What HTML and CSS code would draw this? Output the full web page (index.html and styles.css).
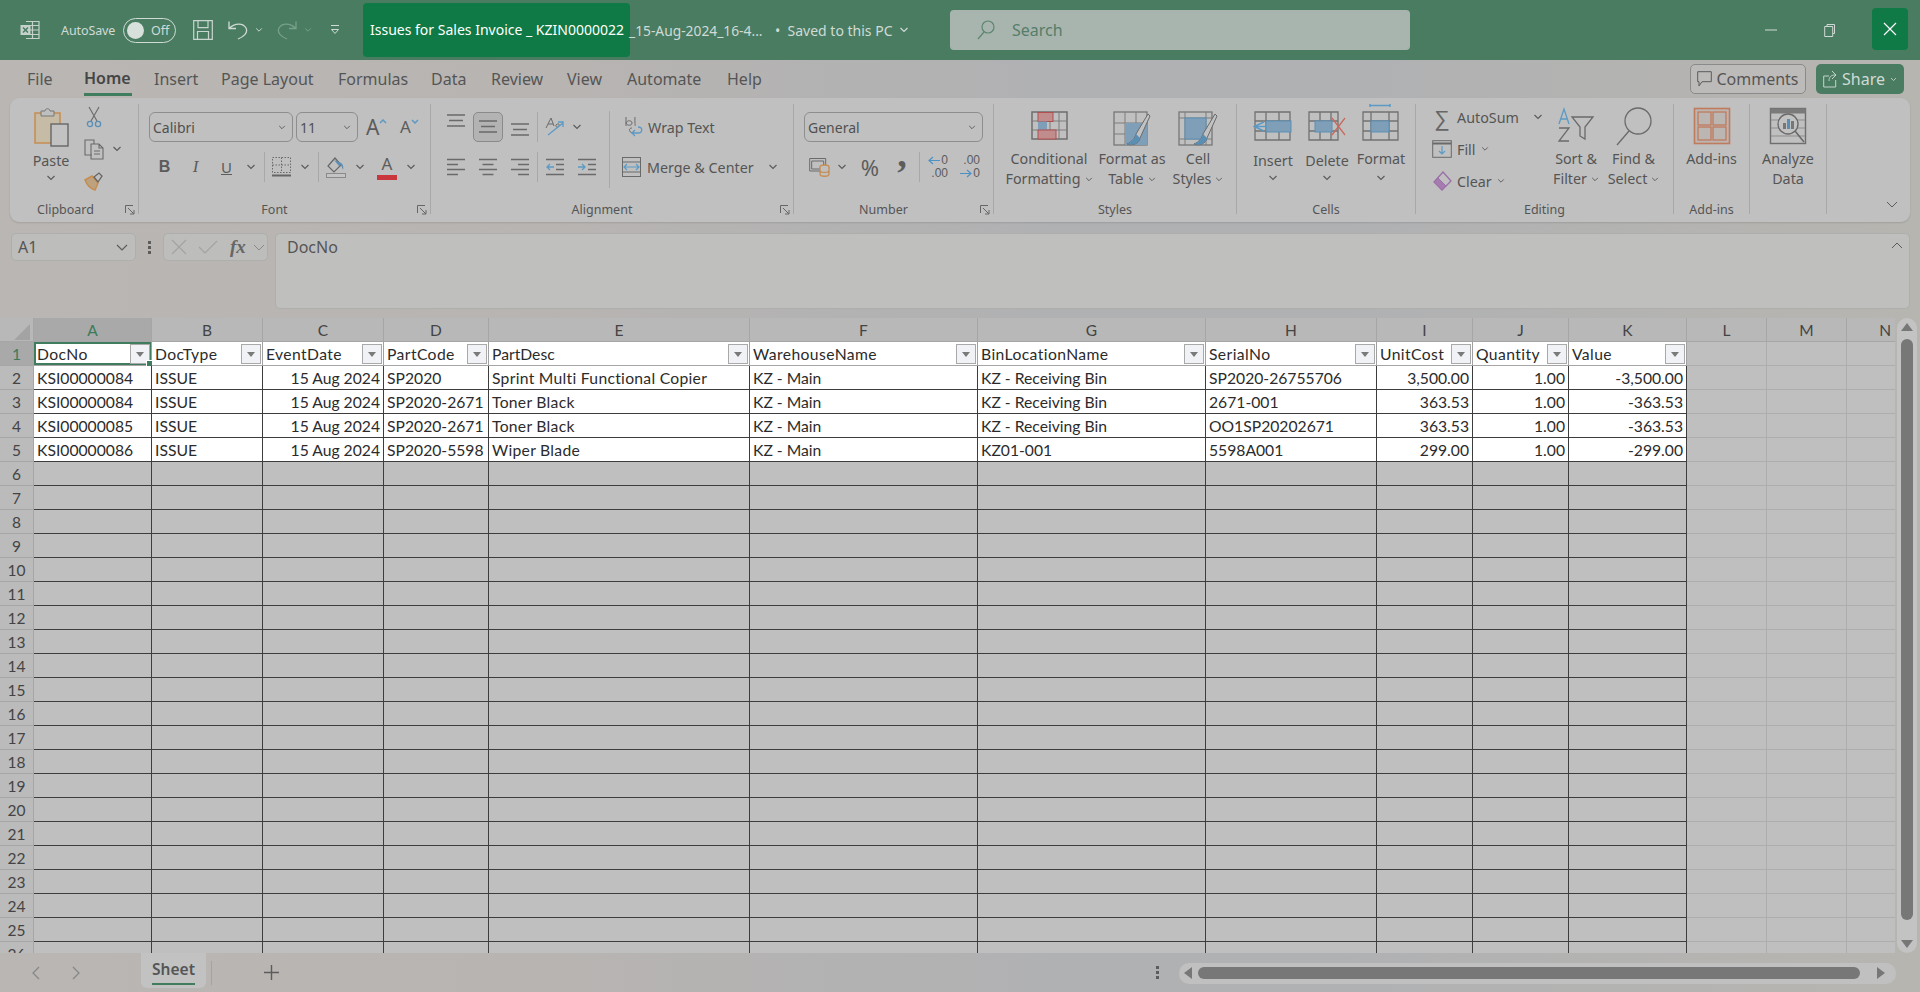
FILE: index.html
```html
<!DOCTYPE html>
<html lang="en">
<head>
<meta charset="utf-8">
<title>Issues for Sales Invoice - Excel</title>
<link rel="stylesheet" href="styles.css">
</head>
<body>
<svg class="sprite" aria-hidden="true">
  <symbol id="chev" viewBox="0 0 10 6"><path d="M1.5 1l3.5 3.5L8.500 1" fill="none" stroke="currentColor" stroke-width="1.200"/></symbol>
  <symbol id="launch" viewBox="0 0 10 10"><path d="M.5 8V.5H8M3 3l6 6M9 5v4H5" fill="none" stroke="#666" stroke-width="1"/></symbol>
  <symbol id="al3" viewBox="0 0 18 14"><path d="M0 1h18M2 6.500h14M0 12h18" stroke="#6a6a6a" stroke-width="1.300"/></symbol>
  <symbol id="alL" viewBox="0 0 18 18"><path d="M0 1.500h18M0 6.500h11M0 11.500h18M0 16.500h11" stroke="#6a6a6a" stroke-width="1.300"/></symbol>
  <symbol id="alC" viewBox="0 0 18 18"><path d="M0 1.500h18M3.500 6.500h11M0 11.500h18M3.500 16.500h11" stroke="#6a6a6a" stroke-width="1.300"/></symbol>
  <symbol id="alR" viewBox="0 0 18 18"><path d="M0 1.500h18M7 6.500h11M0 11.500h18M7 16.500h11" stroke="#6a6a6a" stroke-width="1.300"/></symbol>
</svg>

<header class="titlebar">
  <svg class="t-logo" width="20" height="20" viewBox="0 0 20 20"><path d="M6 1.500h13v17H6M6 5.500h13M6 10h13M6 14.500h13M12.500 1.500v17" fill="none" stroke="#c4d2ca" stroke-width="1.200"/><rect x="0.500" y="5" width="10" height="10" fill="#c4d2ca"/><path d="M3 7.500l5 5M8 7.500l-5 5" stroke="#4a7c62" stroke-width="1.500"/></svg>
  <span class="t-autosave">AutoSave</span>
  <span class="toggle"><span class="knob"></span><span class="toggle-text">Off</span></span>
  <svg class="t-save" width="20" height="20" viewBox="0 0 20 20"><path d="M.7.700h18.600v18.600H.7zM5 .7v7h10v-7M4.500 19v-7.500h11V19" fill="none" stroke="#c9d5cf" stroke-width="1.200"/></svg>
  <svg class="t-undo" width="20" height="20" viewBox="0 0 20 20"><path d="M1 1.500v7h7M1.500 8C7 3 15 2.500 18 8c2.500 5-3 9-8 11" fill="none" stroke="#cfdad4" stroke-width="1.300"/></svg>
  <svg class="chev t-chev1"><use href="#chev"/></svg>
  <svg class="t-redo" width="20" height="20" viewBox="0 0 20 20"><path d="M19 1.500v7h-7M18.500 8C13 3 5 2.500 2 8c-2.500 5 3 9 8 11" fill="none" stroke="#78a08b" stroke-width="1.300"/></svg>
  <svg class="chev t-chev2 dim"><use href="#chev"/></svg>
  <svg class="t-custom" width="10" height="12" viewBox="0 0 10 12"><path d="M1 1.500h8M1.500 5.500L5 9.500l3.500-4z" fill="none" stroke="#cfdad4"/></svg>
  <div class="t-file"><span class="t-file-box">Issues for Sales Invoice _ KZIN0000022</span><span class="t-file-rest">_15-Aug-2024_16-4...</span></div>
  <span class="t-saved">• &nbsp;Saved to this PC</span>
  <svg class="chev t-chev3"><use href="#chev"/></svg>
  <div class="search">
    <svg width="18" height="20" viewBox="0 0 18 20"><circle cx="11" cy="7" r="6" fill="none" stroke="#5d8570" stroke-width="1.200"/><path d="M7 12L1 19" stroke="#5d8570" stroke-width="1.200"/></svg>
    <span>Search</span>
  </div>
  <div class="win">
    <svg class="w-min" width="12" height="2" viewBox="0 0 12 2"><path d="M0 1h12" stroke="#cfdad4"/></svg>
    <svg class="w-res" width="12" height="14" viewBox="0 0 12 14"><path d="M3 3V1.500h7.500v9H9M.7 3.500h8v10h-8z" fill="none" stroke="#cfdad4"/></svg>
    <div class="w-close"><svg width="14" height="14" viewBox="0 0 14 14"><path d="M1 1l12 12M13 1L1 13" stroke="#fff" stroke-width="1.200"/></svg></div>
  </div>
</header>

<nav class="tabs">
  <span class="tab tab-file">File</span>
  <span class="tab tab-home">Home</span>
  <span class="tab tab-insert">Insert</span>
  <span class="tab tab-layout">Page Layout</span>
  <span class="tab tab-formulas">Formulas</span>
  <span class="tab tab-data">Data</span>
  <span class="tab tab-review">Review</span>
  <span class="tab tab-view">View</span>
  <span class="tab tab-auto">Automate</span>
  <span class="tab tab-help">Help</span>
  <div class="tab-actions">
    <span class="btn-comments"><svg width="15" height="16" viewBox="0 0 15 16"><path d="M.7.700h13.600v10H5L2 15v-4.300H.7z" fill="none" stroke="#5c5c5c"/></svg>Comments</span>
    <span class="btn-share"><svg width="14" height="18" viewBox="0 0 14 18"><path d="M6 6H.7v11h12V10M6 11C6 7 8 5 12 5M9 1l4 4-4 4" fill="none" stroke="#c6d4cc"/></svg>Share<svg class="chev mini"><use href="#chev"/></svg></span>
  </div>
</nav>

<section class="ribbon">
  <div class="group g-clip">
    <div class="g-body row">
      <div class="big paste">
        <svg class="big-ic" viewBox="0 0 40 45"><rect x="4" y="9" width="25" height="30" fill="#c6bba4" stroke="#c68c50" stroke-width="1.500"/><path d="M10 12V7h4c0-3 5-3 5 0h4v5z" fill="#bfbfbf" stroke="#777"/><rect x="20" y="20" width="17" height="22" fill="#c2c2c2" stroke="#666" stroke-width="1.400"/></svg>
        <span class="big-t">Paste</span>
        <svg class="chev"><use href="#chev"/></svg>
      </div>
      <div class="stack clip-stack">
        <div class="s-row"><svg class="clip-ic" width="20" height="22" viewBox="0 0 20 22"><path d="M5 1l8 14M15 1L7 15" stroke="#6a6a6a" stroke-width="1.100"/><circle cx="6" cy="18" r="2.600" fill="none" stroke="#5a8fb5" stroke-width="1.300"/><circle cx="14" cy="18" r="2.600" fill="none" stroke="#5a8fb5" stroke-width="1.300"/></svg></div>
        <div class="s-row"><svg class="clip-ic" width="20" height="22" viewBox="0 0 20 22"><path d="M8 17H1V2h9v4M7 6h8l4 4v11H7zM15 6v4h4M10 13h6M10 16h6" fill="none" stroke="#6a6a6a" stroke-width="1.100"/></svg><svg class="chev clip-chev"><use href="#chev"/></svg></div>
        <div class="s-row"><svg class="clip-ic" width="20" height="20" viewBox="0 0 20 20"><path d="M1 9l7-4 6 7-3 7c-4-1-8-5-10-10z" fill="#bda27f" stroke="#c68c50" stroke-width="1.500"/><path d="M10 6l5-4 3 3-4 6z" fill="none" stroke="#666" stroke-width="1.300"/></svg></div>
      </div>
    </div>
    <div class="g-label shift-17">Clipboard<svg class="launch"><use href="#launch"/></svg></div>
  </div>

  <div class="group g-font">
    <div class="g-body rows">
      <div class="rw">
        <span class="select sel-font">Calibri<svg class="chev"><use href="#chev"/></svg></span>
        <span class="select sel-size">11<svg class="chev"><use href="#chev"/></svg></span>
        <span class="grow-a">A<svg class="caret" width="8" height="5" viewBox="0 0 8 5"><path d="M1 4l3-3 3 3" fill="none" stroke="#5a9ac5" stroke-width="1.500"/></svg></span>
        <span class="shrink-a">A<svg class="caret" width="8" height="5" viewBox="0 0 8 5"><path d="M1 1l3 3 3-3" fill="none" stroke="#5a9ac5" stroke-width="1.500"/></svg></span>
      </div>
      <div class="rw">
        <span class="fmt fmt-b">B</span><span class="fmt fmt-i">I</span><span class="fmt fmt-u">U</span>
        <svg class="chev w18"><use href="#chev"/></svg>
        <span class="vsep m4"></span>
        <svg class="m7" width="19" height="20" viewBox="0 0 19 20"><path d="M.5.500h18v15H.5zM9.500.5v15M.5 8h18" fill="none" stroke="#6a6a6a" stroke-dasharray="1.500 1.500"/><path d="M0 18.500h19" stroke="#666" stroke-width="2"/></svg>
        <svg class="chev w18 m5"><use href="#chev"/></svg>
        <span class="vsep m4"></span>
        <svg class="m7" width="20" height="21" viewBox="0 0 20 21"><path d="M9 1L2 9l6 6 7-7z" fill="none" stroke="#666" stroke-width="1.200"/><path d="M8 3l5 6 2-1 2 5c1-3 0-7-4-8" fill="#5a8fb5"/><rect x=".5" y="16.500" width="19" height="4" fill="#c4c4c4" stroke="#8a8a8a"/></svg>
        <svg class="chev w18 m5"><use href="#chev"/></svg>
        <span class="font-color">A</span>
        <svg class="chev w18 m5"><use href="#chev"/></svg>
      </div>
    </div>
    <div class="g-label shift-20">Font<svg class="launch"><use href="#launch"/></svg></div>
  </div>

  <div class="group g-align">
    <div class="g-body row">
      <div class="rows a-block">
        <div class="rw">
          <svg class="va-top" width="18" height="14"><use href="#al3"/></svg>
          <span class="pressed m8"><svg width="18" height="14"><use href="#al3"/></svg></span>
          <svg class="m8 va-bot" width="18" height="14"><use href="#al3"/></svg>
          <span class="vsep m8"></span>
          <svg class="m7" width="20" height="20" viewBox="0 0 20 20"><path d="M1 11L6 1l3 8M3 7h5M11 8c2-2 4-1 3 1s-4 1-3-1z" fill="none" stroke="#6a6a6a"/><path d="M3 18L18 6M13 5h5v5" fill="none" stroke="#5a9ac5" stroke-width="1.300"/></svg>
          <svg class="chev w18 m3"><use href="#chev"/></svg>
        </div>
        <div class="rw">
          <svg width="18" height="18"><use href="#alL"/></svg>
          <svg class="m14" width="18" height="18"><use href="#alC"/></svg>
          <svg class="m14" width="18" height="18"><use href="#alR"/></svg>
          <span class="vsep m8"></span>
          <svg class="m8" width="18" height="18" viewBox="0 0 18 18"><path d="M0 1.500h18M10 6.500h8M10 11.500h8M0 16.500h18" stroke="#6a6a6a" stroke-width="1.300"/><path d="M8 9H1M4 6L1 9l3 3" fill="none" stroke="#5a9ac5" stroke-width="1.300"/></svg>
          <svg class="m14" width="18" height="18" viewBox="0 0 18 18"><path d="M0 1.500h18M10 6.500h8M10 11.500h8M0 16.500h18" stroke="#6a6a6a" stroke-width="1.300"/><path d="M0 9h7M4 6l3 3-3 3" fill="none" stroke="#5a9ac5" stroke-width="1.300"/></svg>
        </div>
      </div>
      <span class="long-sep"></span>
      <div class="rows">
        <div class="rw">
          <svg class="m15" width="18" height="22" viewBox="0 0 18 22"><path d="M1 10V1M1 7c1-3 6-3 6 0s-5 3-6 0M10 1c-.5 5 .5 9 0 9M8 17c-4 0-5-5-1-5" fill="none" stroke="#6a6a6a"/><path d="M7 17h6c5 0 5-6 0-6M10 14l-3 3 3 3" fill="none" stroke="#5a9ac5" stroke-width="1.300"/></svg>
          <span class="rb-text m5">Wrap Text</span>
        </div>
        <div class="rw">
          <svg class="m12" width="19" height="20" viewBox="0 0 19 20"><rect x=".5" y=".5" width="18" height="19" fill="none" stroke="#6a6a6a"/><path d="M.5 5h18M.5 15h18" stroke="#6a6a6a"/><path d="M2 10h15M5 7l-3 3 3 3M14 7l3 3-3 3" fill="none" stroke="#5a9ac5" stroke-width="1.200"/></svg>
          <span class="rb-text m6">Merge &amp; Center</span>
          <svg class="chev w18 m10"><use href="#chev"/></svg>
        </div>
      </div>
    </div>
    <div class="g-label shift-20">Alignment<svg class="launch"><use href="#launch"/></svg></div>
  </div>

  <div class="group g-number">
    <div class="g-body rows">
      <div class="rw"><span class="select sel-gen">General<svg class="chev"><use href="#chev"/></svg></span></div>
      <div class="rw">
        <svg class="m5" width="21" height="20" viewBox="0 0 21 20"><path d="M.7 1.500h16V14H.7zM2.700 4h12v8H2.700z" fill="none" stroke="#6a6a6a"/><ellipse cx="15.500" cy="10" rx="4.500" ry="2" fill="#c0c0c0" stroke="#c68c50" stroke-width="1.300"/><path d="M11 10v7c0 3 9 3 9 0v-7M11 13.500c0 2.500 9 2.500 9 0" fill="#c0c0c0" stroke="#c68c50" stroke-width="1.300"/></svg>
        <svg class="chev w18 m3"><use href="#chev"/></svg>
        <span class="pct">%</span>
        <span class="comma">,</span>
        <span class="vsep m11"></span>
        <span class="dec m7"><span class="dec-l"><svg width="12" height="9" viewBox="0 0 12 9"><path d="M12 4.500H1M5 1L1 4.500 5 8" fill="none" stroke="#4d92c4" stroke-width="1.200"/></svg>0</span><span>.00</span></span>
        <span class="dec m11"><span>.00</span><span class="dec-l"><svg width="12" height="9" viewBox="0 0 12 9"><path d="M0 4.500h11M7 1l4 3.500L7 8" fill="none" stroke="#4d92c4" stroke-width="1.200"/></svg>0</span></span>
      </div>
    </div>
    <div class="g-label shift-20">Number<svg class="launch"><use href="#launch"/></svg></div>
  </div>

  <div class="group g-styles">
    <div class="g-body cols-styles">
      <div class="big">
        <svg class="big-ic" viewBox="0 0 40 45"><rect x="3" y="8" width="35" height="27" fill="none" stroke="#6e6e6e" stroke-width="1.500"/><path d="M12 8v27M21 8v27M30 8v27M3 17h35M3 26h35" stroke="#7d7d7d"/><rect x="9" y="8.500" width="15" height="9" fill="#c08c8c" stroke="#b05050"/><rect x="9" y="17.500" width="9" height="9" fill="#7f9fb8"/><rect x="9" y="26" width="18" height="9" fill="#c08c8c" stroke="#b05050"/></svg>
        <span class="big-t">Conditional<br>Formatting<svg class="chev inl"><use href="#chev"/></svg></span>
      </div>
      <div class="big">
        <svg class="big-ic" viewBox="0 0 40 45"><rect x="2" y="8" width="33" height="33" fill="none" stroke="#777" stroke-width="1.300"/><path d="M13 8v33M24 8v33M2 19h33M2 30h33" stroke="#7d7d7d"/><rect x="13" y="19" width="22" height="22" fill="#7f9fb8"/><path d="M36 10L24 30c-1 4-4 8-9 10 5 2 12 0 13-6l10-22z" fill="#c2c2c2" stroke="#6a6a6a"/><path d="M24 30c-1 4-4 8-9 10 5 2 12 0 13-6z" fill="#5a8fb5"/></svg>
        <span class="big-t">Format as<br>Table<svg class="chev inl"><use href="#chev"/></svg></span>
      </div>
      <div class="big">
        <svg class="big-ic" viewBox="0 0 40 45"><rect x="1" y="8" width="33" height="33" fill="none" stroke="#777" stroke-width="1.300"/><path d="M7 8v33M28 8v33M1 14h33M1 35h33" stroke="#7d7d7d"/><rect x="7" y="14" width="21" height="21" fill="#7f9fb8" stroke="#5a8fb5"/><path d="M37 10L25 30c-1 4-4 8-9 10 5 2 12 0 13-6l10-22z" fill="#c2c2c2" stroke="#6a6a6a"/><path d="M25 30c-1 4-4 8-9 10 5 2 12 0 13-6z" fill="#5a8fb5"/></svg>
        <span class="big-t">Cell<br>Styles<svg class="chev inl"><use href="#chev"/></svg></span>
      </div>
    </div>
    <div class="g-label">Styles</div>
  </div>

  <div class="group g-cells">
    <div class="g-body cols-cells">
      <div class="big">
        <svg class="big-ic" viewBox="0 0 40 45"><path d="M2 8h35v28H2zM2 17h35M2 27h35M13 8v28M26 8v28" fill="none" stroke="#717171" stroke-width="1.300"/><rect x="13" y="17" width="25" height="11" fill="#7f9fb8" stroke="#5a8fb5"/><path d="M11 18l-10 4.500L11 27M2 22.500h12" fill="none" stroke="#5a9ac5" stroke-width="1.500"/></svg>
        <span class="big-t lo">Insert</span><svg class="chev"><use href="#chev"/></svg>
      </div>
      <div class="big">
        <svg class="big-ic" viewBox="0 0 40 45"><path d="M2 8h29v28H2zM2 17h29M2 27h29M13 8v28M24 8v28" fill="none" stroke="#717171" stroke-width="1.300"/><rect x="8" y="17" width="17" height="11" fill="#7f9fb8" stroke="#5a8fb5"/><path d="M25 14l13 17M38 14L25 31" stroke="#c86a60" stroke-width="1.300"/></svg>
        <span class="big-t lo">Delete</span><svg class="chev"><use href="#chev"/></svg>
      </div>
      <div class="big">
        <svg class="big-ic" viewBox="0 0 40 45"><path d="M2 8h35v28H2zM2 17h35M2 27h35M10 8v28M28 8v28" fill="none" stroke="#717171" stroke-width="1.300"/><rect x="10" y="17" width="18" height="11" fill="#7f9fb8" stroke="#5a8fb5"/><path d="M9 1.500h20M9 0v3M29 0v3" stroke="#5a9ac5" stroke-width="1.500"/></svg>
        <span class="big-t">Format</span><svg class="chev cfmt"><use href="#chev"/></svg>
      </div>
    </div>
    <div class="g-label">Cells</div>
  </div>

  <div class="group g-edit">
    <div class="g-body row">
      <div class="stack edit-stack">
        <div class="s-row"><span class="sigma">∑</span><span class="rb-text ed-t">AutoSum</span><svg class="chev w18 m10"><use href="#chev"/></svg></div>
        <div class="s-row"><svg width="20" height="18" viewBox="0 0 20 18"><rect x=".7" y=".7" width="18.600" height="16.600" fill="none" stroke="#6a6a6a"/><path d="M.7 3.500h18.600" stroke="#6a6a6a" stroke-width="2"/><path d="M10 6v8M7 11l3 3 3-3" fill="none" stroke="#5a9ac5" stroke-width="1.200"/></svg><span class="rb-text ed-t m5">Fill</span><svg class="chev w14"><use href="#chev"/></svg></div>
        <div class="s-row"><svg width="20" height="20" viewBox="0 0 20 20"><path d="M11 1l8 9-9 9-8-8z" fill="none" stroke="#9a6fa8" stroke-width="1.300"/><path d="M6 7l8 8-4 4-8-8z" fill="#a57bb0" stroke="#9a6fa8"/></svg><span class="rb-text ed-t m5">Clear</span><svg class="chev w14"><use href="#chev"/></svg></div>
      </div>
      <div class="big col-sort">
        <svg class="big-ic" viewBox="0 0 40 45"><path d="M3 20L8 5l5 15M4.500 15h7" fill="none" stroke="#5a9ac5" stroke-width="1.300"/><path d="M3 24h10L3 37h10" fill="none" stroke="#6a6a6a" stroke-width="1.300"/><path d="M16 13h21l-8 10v12l-5-3V23z" fill="none" stroke="#6a6a6a" stroke-width="1.300"/></svg>
        <span class="big-t">Sort &amp;<br>Filter<svg class="chev inl"><use href="#chev"/></svg></span>
      </div>
      <div class="big col-find">
        <svg class="big-ic" viewBox="0 0 40 45"><circle cx="24" cy="17" r="13" fill="none" stroke="#6a6a6a" stroke-width="1.300"/><path d="M15 27L3 41" stroke="#6a6a6a" stroke-width="1.300"/></svg>
        <span class="big-t">Find &amp;<br>Select<svg class="chev inl"><use href="#chev"/></svg></span>
      </div>
    </div>
    <div class="g-label">Editing</div>
  </div>

  <div class="group g-addins">
    <div class="g-body center">
      <div class="big">
        <svg class="big-ic" viewBox="0 0 40 45"><rect x="2.500" y="4.500" width="35" height="35" fill="#bcb6b2" stroke="#c07a5c" stroke-width="1.600"/><rect x="6" y="8" width="13" height="13" fill="none" stroke="#c07a5c" stroke-width="1.300"/><rect x="21" y="8" width="13" height="13" fill="none" stroke="#c07a5c" stroke-width="1.300"/><rect x="6" y="23" width="13" height="13" fill="none" stroke="#c07a5c" stroke-width="1.300"/><rect x="21" y="23" width="13" height="13" fill="none" stroke="#c07a5c" stroke-width="1.300"/></svg>
        <span class="big-t">Add-ins</span>
      </div>
    </div>
    <div class="g-label">Add-ins</div>
  </div>

  <div class="group g-analyze">
    <div class="g-body center">
      <div class="big">
        <svg class="big-ic" viewBox="0 0 40 45"><rect x="2.500" y="4.500" width="35" height="35" fill="none" stroke="#6e6e6e" stroke-width="1.400"/><rect x="2.500" y="4.500" width="35" height="5" fill="#7a7a7a"/><path d="M3 16h34M3 24h34M3 32h34" stroke="#8d8d8d"/><circle cx="20" cy="20" r="10" fill="#c2c2c2" stroke="#6a6a6a" stroke-width="1.400"/><path d="M27 27l9 11" stroke="#6a6a6a" stroke-width="1.600"/><rect x="15" y="19" width="3" height="6" fill="#777"/><rect x="19" y="15" width="3" height="10" fill="#5a8fb5"/><rect x="23" y="17" width="3" height="8" fill="#777"/></svg>
        <span class="big-t">Analyze<br>Data</span>
      </div>
    </div>
  </div>
  <div class="r-collapse"><svg class="chev-big" viewBox="0 0 12 7"><path d="M1 1l5 5 5-5" fill="none" stroke="#5c5c5c"/></svg></div>
</section>

<section class="formula">
  <div class="namebox"><span>A1</span><svg class="chev-big" viewBox="0 0 12 7"><path d="M1 1l5 5 5-5" fill="none" stroke="#5c5c5c" stroke-width="1.200"/></svg></div>
  <div class="f-dots"><i></i><i></i><i></i></div>
  <div class="fx">
    <svg width="16" height="16" viewBox="0 0 16 16"><path d="M1 1l14 14M15 1L1 15" stroke="#a3a3a3" stroke-width="1.200"/></svg>
    <svg class="fx-check" width="20" height="14" viewBox="0 0 20 14"><path d="M1 7l6 6L19 1" fill="none" stroke="#a3a3a3" stroke-width="1.200"/></svg>
    <span class="fx-t">fx</span>
    <svg class="chev-big fx-ch" viewBox="0 0 12 7"><path d="M1 1l5 5 5-5" fill="none" stroke="#8a8a8a"/></svg>
  </div>
  <div class="f-input"><span>DocNo</span><svg class="chev-big" viewBox="0 0 12 7"><path d="M1 6l5-5 5 5" fill="none" stroke="#5c5c5c"/></svg></div>
</section>

<main class="sheet-wrap">
  <div class="sheet">
    <table class="grid">
      <colgroup><col class="c0"><col class="ca"><col class="cb"><col class="cc"><col class="cd"><col class="ce"><col class="cf"><col class="cg"><col class="ch"><col class="ci"><col class="cj"><col class="ck"><col class="cl"><col class="cm"><col class="cn"></colgroup>
      <thead><tr><th class="corner"><svg width="16" height="16" viewBox="0 0 16 16"><path d="M16 0v16H0z" fill="#a3a3a3"/></svg></th><th class="sel-col">A</th><th>B</th><th>C</th><th>D</th><th>E</th><th>F</th><th>G</th><th>H</th><th>I</th><th>J</th><th>K</th><th>L</th><th>M</th><th class="clip">N</th></tr></thead>
      <tbody>
        <tr class="hdr"><th class="sel-row">1</th>
          <td class="active">DocNo<span class="flt"></span></td><td>DocType<span class="flt"></span></td><td>EventDate<span class="flt"></span></td><td>PartCode<span class="flt"></span></td><td>PartDesc<span class="flt"></span></td><td>WarehouseName<span class="flt"></span></td><td>BinLocationName<span class="flt"></span></td><td>SerialNo<span class="flt"></span></td><td>UnitCost<span class="flt"></span></td><td>Quantity<span class="flt"></span></td><td>Value<span class="flt"></span></td><td></td><td></td><td></td></tr>
        <tr class="data"><th>2</th><td>KSI00000084</td><td>ISSUE</td><td class="r">15 Aug 2024</td><td>SP2020</td><td>Sprint Multi Functional Copier</td><td>KZ - Main</td><td>KZ - Receiving Bin</td><td>SP2020-26755706</td><td class="r">3,500.00</td><td class="r">1.00</td><td class="r">-3,500.00</td><td></td><td></td><td></td></tr>
        <tr class="data"><th>3</th><td>KSI00000084</td><td>ISSUE</td><td class="r">15 Aug 2024</td><td>SP2020-2671</td><td>Toner Black</td><td>KZ - Main</td><td>KZ - Receiving Bin</td><td>2671-001</td><td class="r">363.53</td><td class="r">1.00</td><td class="r">-363.53</td><td></td><td></td><td></td></tr>
        <tr class="data"><th>4</th><td>KSI00000085</td><td>ISSUE</td><td class="r">15 Aug 2024</td><td>SP2020-2671</td><td>Toner Black</td><td>KZ - Main</td><td>KZ - Receiving Bin</td><td>OO1SP20202671</td><td class="r">363.53</td><td class="r">1.00</td><td class="r">-363.53</td><td></td><td></td><td></td></tr>
        <tr class="data"><th>5</th><td>KSI00000086</td><td>ISSUE</td><td class="r">15 Aug 2024</td><td>SP2020-5598</td><td>Wiper Blade</td><td>KZ - Main</td><td>KZ01-001</td><td>5598A001</td><td class="r">299.00</td><td class="r">1.00</td><td class="r">-299.00</td><td></td><td></td><td></td></tr>
        <tr><th>6</th><td></td><td></td><td></td><td></td><td></td><td></td><td></td><td></td><td></td><td></td><td></td><td></td><td></td><td></td></tr>
        <tr><th>7</th><td></td><td></td><td></td><td></td><td></td><td></td><td></td><td></td><td></td><td></td><td></td><td></td><td></td><td></td></tr>
        <tr><th>8</th><td></td><td></td><td></td><td></td><td></td><td></td><td></td><td></td><td></td><td></td><td></td><td></td><td></td><td></td></tr>
        <tr><th>9</th><td></td><td></td><td></td><td></td><td></td><td></td><td></td><td></td><td></td><td></td><td></td><td></td><td></td><td></td></tr>
        <tr><th>10</th><td></td><td></td><td></td><td></td><td></td><td></td><td></td><td></td><td></td><td></td><td></td><td></td><td></td><td></td></tr>
        <tr><th>11</th><td></td><td></td><td></td><td></td><td></td><td></td><td></td><td></td><td></td><td></td><td></td><td></td><td></td><td></td></tr>
        <tr><th>12</th><td></td><td></td><td></td><td></td><td></td><td></td><td></td><td></td><td></td><td></td><td></td><td></td><td></td><td></td></tr>
        <tr><th>13</th><td></td><td></td><td></td><td></td><td></td><td></td><td></td><td></td><td></td><td></td><td></td><td></td><td></td><td></td></tr>
        <tr><th>14</th><td></td><td></td><td></td><td></td><td></td><td></td><td></td><td></td><td></td><td></td><td></td><td></td><td></td><td></td></tr>
        <tr><th>15</th><td></td><td></td><td></td><td></td><td></td><td></td><td></td><td></td><td></td><td></td><td></td><td></td><td></td><td></td></tr>
        <tr><th>16</th><td></td><td></td><td></td><td></td><td></td><td></td><td></td><td></td><td></td><td></td><td></td><td></td><td></td><td></td></tr>
        <tr><th>17</th><td></td><td></td><td></td><td></td><td></td><td></td><td></td><td></td><td></td><td></td><td></td><td></td><td></td><td></td></tr>
        <tr><th>18</th><td></td><td></td><td></td><td></td><td></td><td></td><td></td><td></td><td></td><td></td><td></td><td></td><td></td><td></td></tr>
        <tr><th>19</th><td></td><td></td><td></td><td></td><td></td><td></td><td></td><td></td><td></td><td></td><td></td><td></td><td></td><td></td></tr>
        <tr><th>20</th><td></td><td></td><td></td><td></td><td></td><td></td><td></td><td></td><td></td><td></td><td></td><td></td><td></td><td></td></tr>
        <tr><th>21</th><td></td><td></td><td></td><td></td><td></td><td></td><td></td><td></td><td></td><td></td><td></td><td></td><td></td><td></td></tr>
        <tr><th>22</th><td></td><td></td><td></td><td></td><td></td><td></td><td></td><td></td><td></td><td></td><td></td><td></td><td></td><td></td></tr>
        <tr><th>23</th><td></td><td></td><td></td><td></td><td></td><td></td><td></td><td></td><td></td><td></td><td></td><td></td><td></td><td></td></tr>
        <tr><th>24</th><td></td><td></td><td></td><td></td><td></td><td></td><td></td><td></td><td></td><td></td><td></td><td></td><td></td><td></td></tr>
        <tr><th>25</th><td></td><td></td><td></td><td></td><td></td><td></td><td></td><td></td><td></td><td></td><td></td><td></td><td></td><td></td></tr>
        <tr><th>26</th><td></td><td></td><td></td><td></td><td></td><td></td><td></td><td></td><td></td><td></td><td></td><td></td><td></td><td></td></tr>
      </tbody>
    </table>
  </div>
  <div class="vscroll"><span class="arrow-up"></span><span class="v-thumb"></span><span class="arrow-down"></span></div>
</main>

<footer class="bottom">
  <svg class="nav-l" width="8" height="14" viewBox="0 0 8 14"><path d="M7 1L1 7l6 6" fill="none" stroke="#868686" stroke-width="1.200"/></svg>
  <svg class="nav-r" width="8" height="14" viewBox="0 0 8 14"><path d="M1 1l6 6-6 6" fill="none" stroke="#868686" stroke-width="1.200"/></svg>
  <div class="sheet-tab"><span>Sheet</span></div>
  <span class="b-sep"></span>
  <svg class="plus" width="15" height="15" viewBox="0 0 15 15"><path d="M7.500 0v15M0 7.500h15" stroke="#5c5c5c" stroke-width="1.400"/></svg>
  <div class="b-dots"><i></i><i></i><i></i></div>
  <div class="hscroll"><span class="arrow-left"></span><span class="h-thumb"></span><span class="arrow-right"></span></div>
</footer>
</body>
</html>
```

FILE: styles.css
```css
* { box-sizing: border-box; }
html, body { margin: 0; height: 992px; overflow: hidden; }
body {
  width: 1920px;
  font-family: "Noto Sans", sans-serif;
  color: #555;
  background: linear-gradient(90deg, #b9b6b3 0%, #b7b4b2 30%, #b0b1b3 55%, #b0b1b3 70%, #b7b5b0 100%);
}
svg { display: block; flex: none; }
.sprite { display: none; }
.chev { width: 10px; height: 6px; color: #5c5c5c; }
.chev-big { width: 12px; height: 7px; }
.dim { color: #78a08b; }

/* title bar */
.titlebar { height: 60px; background: #4a7c62; display: flex; align-items: center; color: #d0dbd5; font-size: 14px; padding-left: 20px; }
.t-autosave { margin-left: 21px; width: 62px; font-size: 12.500px; letter-spacing: -.1px; }
.toggle { margin-left: 0; width: 53px; height: 25px; border: 1px solid #d0dbd5; border-radius: 13px; display: flex; align-items: center; padding-left: 3px; }
.knob { width: 17px; height: 17px; border-radius: 50%; background: #d8e0dc; }
.toggle-text { margin-left: 7px; font-size: 12.500px; }
.t-save { margin-left: 17px; }
.t-undo { margin-left: 15px; }
.t-chev1 { margin-left: 7px; color: #cfdad4; width: 8px; }
.t-redo { margin-left: 14px; }
.t-chev2 { margin-left: 7px; width: 8px; }
.t-custom { margin-left: 18px; }
.t-file { margin-left: 23px; display: flex; align-items: center; height: 54px; white-space: nowrap; }
.t-file-box { width: 267px; height: 54px; background: #0f7a45; border-radius: 4px; color: #fff; padding-left: 7px; line-height: 54px; font-size: 14px; white-space: nowrap; }
.t-file-rest { font-size: 13.800px; width: 133px; margin-left: -1px; }
.t-saved { margin-left: 13px; font-size: 14px; width: 121px; white-space: nowrap; }
.t-chev3 { margin-left: 3px; color: #d0dbd5; }
.search { margin-left: 41px; width: 460px; height: 40px; border-radius: 4px; background: #a8b5ae; display: flex; align-items: center; padding-left: 27px; color: #567d69; font-size: 16px; gap: 17px; }
.win { margin-left: auto; display: flex; align-items: center; padding-right: 12px; }
.w-res { margin-left: 47px; }
.w-close { margin-left: 36px; width: 36px; height: 42px; background: #0f7a45; border-radius: 4px; display: flex; align-items: center; justify-content: center; margin-top: -2px; }

/* tabs */
.tabs { height: 38px; display: flex; align-items: center; font-size: 16px; position: relative; }
.tab { white-space: nowrap; color: #555; line-height: 32px; }
.tab-file { margin-left: 27px; width: 57px; }
.tab-home { width: 48px; font-weight: 600; color: #454545; border-bottom: 3px solid #3f7d5e; line-height: 31px; margin-top: 1px; margin-right: 22px; height: 33px; }
.tab-insert { width: 67px; }
.tab-layout { width: 117px; }
.tab-formulas { width: 93px; }
.tab-data { width: 60px; }
.tab-review { width: 76px; }
.tab-view { width: 60px; }
.tab-auto { width: 100px; }
.tab-actions { margin-left: auto; display: flex; gap: 10px; padding-right: 16px; }
.btn-comments { width: 116px; height: 30px; border: 1px solid #8a8a8a; border-radius: 5px; display: flex; align-items: center; justify-content: center; gap: 4px; font-size: 16px; background: #bdbbb9; }
.btn-share { width: 88px; height: 30px; background: #4a7c62; border-radius: 5px; color: #d0dbd5; display: flex; align-items: center; justify-content: center; gap: 5px; font-size: 16px; }
.mini { width: 7px; height: 5px; color: #d0dbd5; }

/* ribbon */
.ribbon { margin: 0 10px; height: 124px; background: #c0c0c0; border-radius: 9px; display: flex; padding-top: 6px; box-shadow: 0 1px 2px rgba(0,0,0,.12); font-size: 14.300px; }
.group { height: 110px; border-right: 1px solid #a8a8a8; display: flex; flex-direction: column; position: relative; flex: none; }
.g-clip { width: 129px; padding-left: 17px; }
.g-font { width: 292px; padding-left: 10px; }
.g-align { width: 363px; padding-left: 16px; }
.g-number { width: 200px; padding-left: 10px; }
.g-styles { width: 243px; padding-left: 14px; }
.g-cells { width: 179px; padding-left: 9px; }
.g-edit { width: 258px; padding-left: 16px; }
.g-addins { width: 76px; }
.g-analyze { width: 77px; }
.g-body { height: 97px; }
.g-label { position: absolute; left: 0; right: 0; bottom: -4px; height: 16px; line-height: 16px; text-align: center; font-size: 12.500px; color: #555; }
.shift-17 { padding-right: 17px; }
.shift-20 { padding-right: 20px; }
.launch { position: absolute; right: 3px; top: 3px; width: 10px; height: 10px; }
.row { display: flex; align-items: flex-start; }
.rows { display: flex; flex-direction: column; gap: 10px; padding-top: 8px; }
.rw { display: flex; align-items: center; height: 30px; }
.center { display: flex; justify-content: center; }
.big { display: flex; flex-direction: column; align-items: center; width: 100%; }
.big-ic { width: 40px; height: 45px; }
.big-t { line-height: 20px; text-align: center; white-space: nowrap; }
.big-t.lo { margin-top: 2px; }
.big .chev { margin-top: 4px; }
.big .chev.inl { display: inline-block; margin: 0 0 2px 4px; width: 8px; height: 5px; vertical-align: middle; }
.big .chev.cfmt { margin-top: 6px; }
.paste { width: 48px; flex: none; }
.paste .big-t { margin-top: 2px; }
.cols-styles { display: grid; grid-template-columns: 82px 84px 48px; }
.cols-cells { display: grid; grid-template-columns: 54px 54px 54px; }
.stack { display: flex; flex-direction: column; gap: 6px; }
.s-row { height: 26px; display: flex; align-items: center; }
.clip-stack { margin-left: 9px; }
.clip-chev { margin-left: 8px; }
.edit-stack { width: 116px; flex: none; }
.col-sort { width: 56px; flex: none; }
.col-find { width: 57px; flex: none; margin-left: 1px; }
.sigma { font-size: 22px; width: 20px; line-height: 26px; color: #666; text-align: center; }
.ed-t { margin-left: 5px; }
.rb-text { white-space: nowrap; }
.select { height: 30px; border: 1px solid #8e8e8e; border-radius: 6px; display: flex; align-items: center; justify-content: space-between; padding: 0 6px 0 3px; font-size: 14px; color: #505050; }
.sel-font { width: 144px; }
.sel-size { width: 62px; margin-left: 3px; }
.sel-gen { width: 179px; }
.select .chev { width: 8px; height: 5px; }
.grow-a { margin-left: 8px; width: 34px; display: flex; font-size: 21px; line-height: 30px; color: #5c5c5c; }
.shrink-a { width: 20px; display: flex; font-size: 17px; line-height: 30px; color: #5c5c5c; }
.caret { margin-top: 7px; }
.fmt { width: 31px; text-align: center; font-size: 15px; color: #5c5c5c; }
.fmt-b { font-weight: 700; font-family: "Liberation Sans", sans-serif; font-size: 16px; }
.fmt-i { font-style: italic; font-family: "Liberation Serif", serif; font-size: 17px; }
.fmt-u { text-decoration: underline; font-family: "Noto Sans", sans-serif; }
.w18 { width: 18px; height: 6px; padding: 0 4px; }
.w14 { width: 14px; height: 6px; padding: 0 3px; margin-left: 2px; }
.vsep { width: 1px; height: 30px; background: #a8a8a8; flex: none; }
.m3 { margin-left: 3px; } .m4 { margin-left: 4px; } .m5 { margin-left: 5px; } .m6 { margin-left: 6px; }
.m7 { margin-left: 7px; } .m8 { margin-left: 8px; } .m9 { margin-left: 9px; } .m10 { margin-left: 10px; }
.m11 { margin-left: 11px; } .m12 { margin-left: 12px; } .m14 { margin-left: 14px; } .m15 { margin-left: 15px; }
.font-color { margin-left: 8px; width: 20px; text-align: center; font-size: 17px; line-height: 20px; height: 21px; color: #5c5c5c; border-bottom: 5px solid #c9363c; box-sizing: content-box; }
.pressed { width: 30px; height: 30px; border: 1px solid #8a8a8a; border-radius: 5px; background: #b3b3b3; display: flex; align-items: center; justify-content: center; }
.va-top { margin-top: -12px; }
.va-bot { margin-top: 6px; }
.a-block { width: 162px; flex: none; }
.long-sep { width: 1px; height: 77px; margin-top: 7px; background: #a8a8a8; flex: none; }
.pct { margin-left: 7px; width: 24px; text-align: center; font-size: 22px; color: #5c5c5c; }
.comma { margin-left: 14px; width: 12px; text-align: center; font-size: 38px; font-weight: 700; line-height: 30px; margin-top: -26px; color: #5c5c5c; font-family: "Liberation Serif", serif; }
.dec { width: 21px; font-family: "Liberation Sans", sans-serif; font-size: 12px; line-height: 13px; display: flex; flex-direction: column; align-items: flex-end; color: #5c5c5c; }
.dec-l { display: flex; align-items: center; gap: 1px; }
.r-collapse { flex: 1; height: 104px; display: flex; align-items: flex-end; justify-content: flex-end; padding-right: 12px; }

/* formula bar */
.formula { display: flex; padding: 11px 10px 9px 11px; height: 96px; }
.namebox { width: 125px; height: 28px; background: #bdbdbb; border: 1px solid #aeaeac; border-radius: 5px; display: flex; align-items: center; justify-content: space-between; padding: 0 7px 0 6px; font-size: 16px; line-height: 24px; color: #555; }
.f-dots { width: 27px; display: flex; flex-direction: column; align-items: center; justify-content: center; gap: 2px; height: 28px; }
.f-dots i, .b-dots i { width: 3px; height: 3px; background: #5c5c5c; display: block; }
.fx { width: 105px; height: 28px; background: #bdbdbb; border: 1px solid #aeaeac; border-radius: 5px; display: flex; align-items: center; padding-left: 7px; }
.fx-check { margin-left: 11px; }
.fx-t { margin-left: 12px; font-family: "Liberation Serif", serif; font-style: italic; font-weight: 700; font-size: 19px; color: #666; width: 20px; }
.fx-ch { margin-left: 3px; }
.f-input { margin-left: 7px; flex: 1; height: 76px; background: #bfbfbe; border: 1px solid #aeaeac; border-radius: 5px; display: flex; justify-content: space-between; padding: 2px 6px 0 11px; font-size: 16px; color: #555; }
.f-input .chev-big { margin-top: 6px; }

/* sheet */
.sheet-wrap { display: flex; height: 635px; }
.sheet { width: 1895px; height: 635px; overflow: hidden; flex: none; background: #bfbfbf; }
.grid { table-layout: fixed; width: 1895px; border-collapse: separate; border-spacing: 0; font-family: "Lato", sans-serif; font-size: 15.700px; color: #2b2b2b; }
.c0 { width: 34px; } .ca { width: 118px; } .cb { width: 111px; } .cc { width: 121px; } .cd { width: 105px; }
.ce { width: 261px; } .cf { width: 228px; } .cg { width: 228px; } .ch { width: 171px; } .ci { width: 96px; }
.cj { width: 96px; } .ck { width: 118px; } .cl { width: 80px; } .cm { width: 80px; } .cn { width: 48px; }
.grid tr { height: 24px; }
.grid th { font-weight: 400; background: #bbb; color: #444; font-size: 15.500px; padding: 0; border-right: 1px solid #a6a6a6; border-bottom: 1px solid #a6a6a6; text-align: center; height: 24px; line-height: 22px; overflow: hidden; }
.grid thead th { background: #b8b8b8; }
.corner svg { margin: 4px 0 0 14px; }
.grid thead th.sel-col { background: #a9a9a9; color: #3b7b59; }
.grid th.sel-row { background: #a9a9a9; color: #3b7b59; }
.grid thead th.clip { text-align: right; padding-right: 4px; border-right: 0; }
.grid td { padding: 0 3px; height: 24px; line-height: 22px; border-right: 1px solid #3d3d3d; border-bottom: 1px solid #3d3d3d; background: #bfbfbf; white-space: nowrap; overflow: hidden; position: relative; }
.grid td:nth-child(n+13) { border-color: #adadad; }
.grid td:nth-child(12) { border-right-color: #3d3d3d; }
.grid td:last-child { border-right: 0; }
.grid .data td:nth-child(-n+12) { background: #fff; }
.grid .data td:nth-child(6) { letter-spacing: .28px; }
.grid .hdr td { letter-spacing: .4px; }
.grid .hdr td:nth-child(6) { letter-spacing: 0; }
.grid .hdr td:nth-child(-n+12) { background: #fff; border-bottom-color: #a6a6a6; border-right-color: #a0a0a0; }
.grid .hdr td:nth-child(n+13) { background: #bfbfbf; }
.grid td.r { text-align: right; }
.grid td.active { overflow: visible; box-shadow: inset 0 0 0 2px #3f7d5e; }
.grid td.active::after { content: ""; position: absolute; right: -3px; bottom: -3px; width: 6px; height: 6px; background: #3f7d5e; border: 1px solid #fff; }
.flt { position: absolute; right: 1px; top: 2px; width: 20px; height: 20px; background: #f1f2f5; border: 1px solid #a9a9a9; }
.flt::after { content: ""; position: absolute; left: 5px; top: 7px; border: 4px solid transparent; border-top: 5px solid #7a7a7a; border-bottom: 0; }

/* vertical scrollbar */
.vscroll { width: 20px; margin-left: 2px; background: #c3c3c3; border-radius: 10px; display: flex; flex-direction: column; align-items: center; height: 635px; padding-top: 5px; }
.arrow-up { border: 6px solid transparent; border-bottom: 8px solid #777; border-top: 0; }
.v-thumb { width: 12px; height: 581px; margin-top: 8px; background: #777; border-radius: 6px; }
.arrow-down { border: 6px solid transparent; border-top: 8px solid #777; border-bottom: 0; margin-top: 20px; }

/* bottom bar */
.bottom { height: 39px; display: flex; align-items: center; position: relative; }
.nav-l { margin-left: 32px; }
.nav-r { margin-left: 32px; }
.sheet-tab { margin-left: 61px; width: 65px; height: 35px; align-self: flex-start; background: #c2c2c2; border-radius: 0 0 6px 6px; display: flex; justify-content: center; }
.sheet-tab span { height: 32px; border-bottom: 2px solid #3f7d5e; font-size: 15.500px; font-weight: 600; color: #555; line-height: 32px; }
.b-sep { margin-left: 5px; width: 1px; height: 24px; background: #a3a3a3; }
.plus { margin-left: 52px; }
.b-dots { margin-left: 877px; display: flex; flex-direction: column; gap: 2px; }
.hscroll { margin-left: 20px; width: 717px; height: 21px; background: #c0c0c0; border-radius: 10px; display: flex; align-items: center; padding: 0 5px; margin-top: 1px; }
.arrow-left { border: 6px solid transparent; border-right: 8px solid #777; border-left: 0; }
.h-thumb { margin-left: 6px; width: 662px; height: 12px; background: #777; border-radius: 6px; }
.arrow-right { margin-left: 17px; border: 6px solid transparent; border-left: 8px solid #777; border-right: 0; }
```
